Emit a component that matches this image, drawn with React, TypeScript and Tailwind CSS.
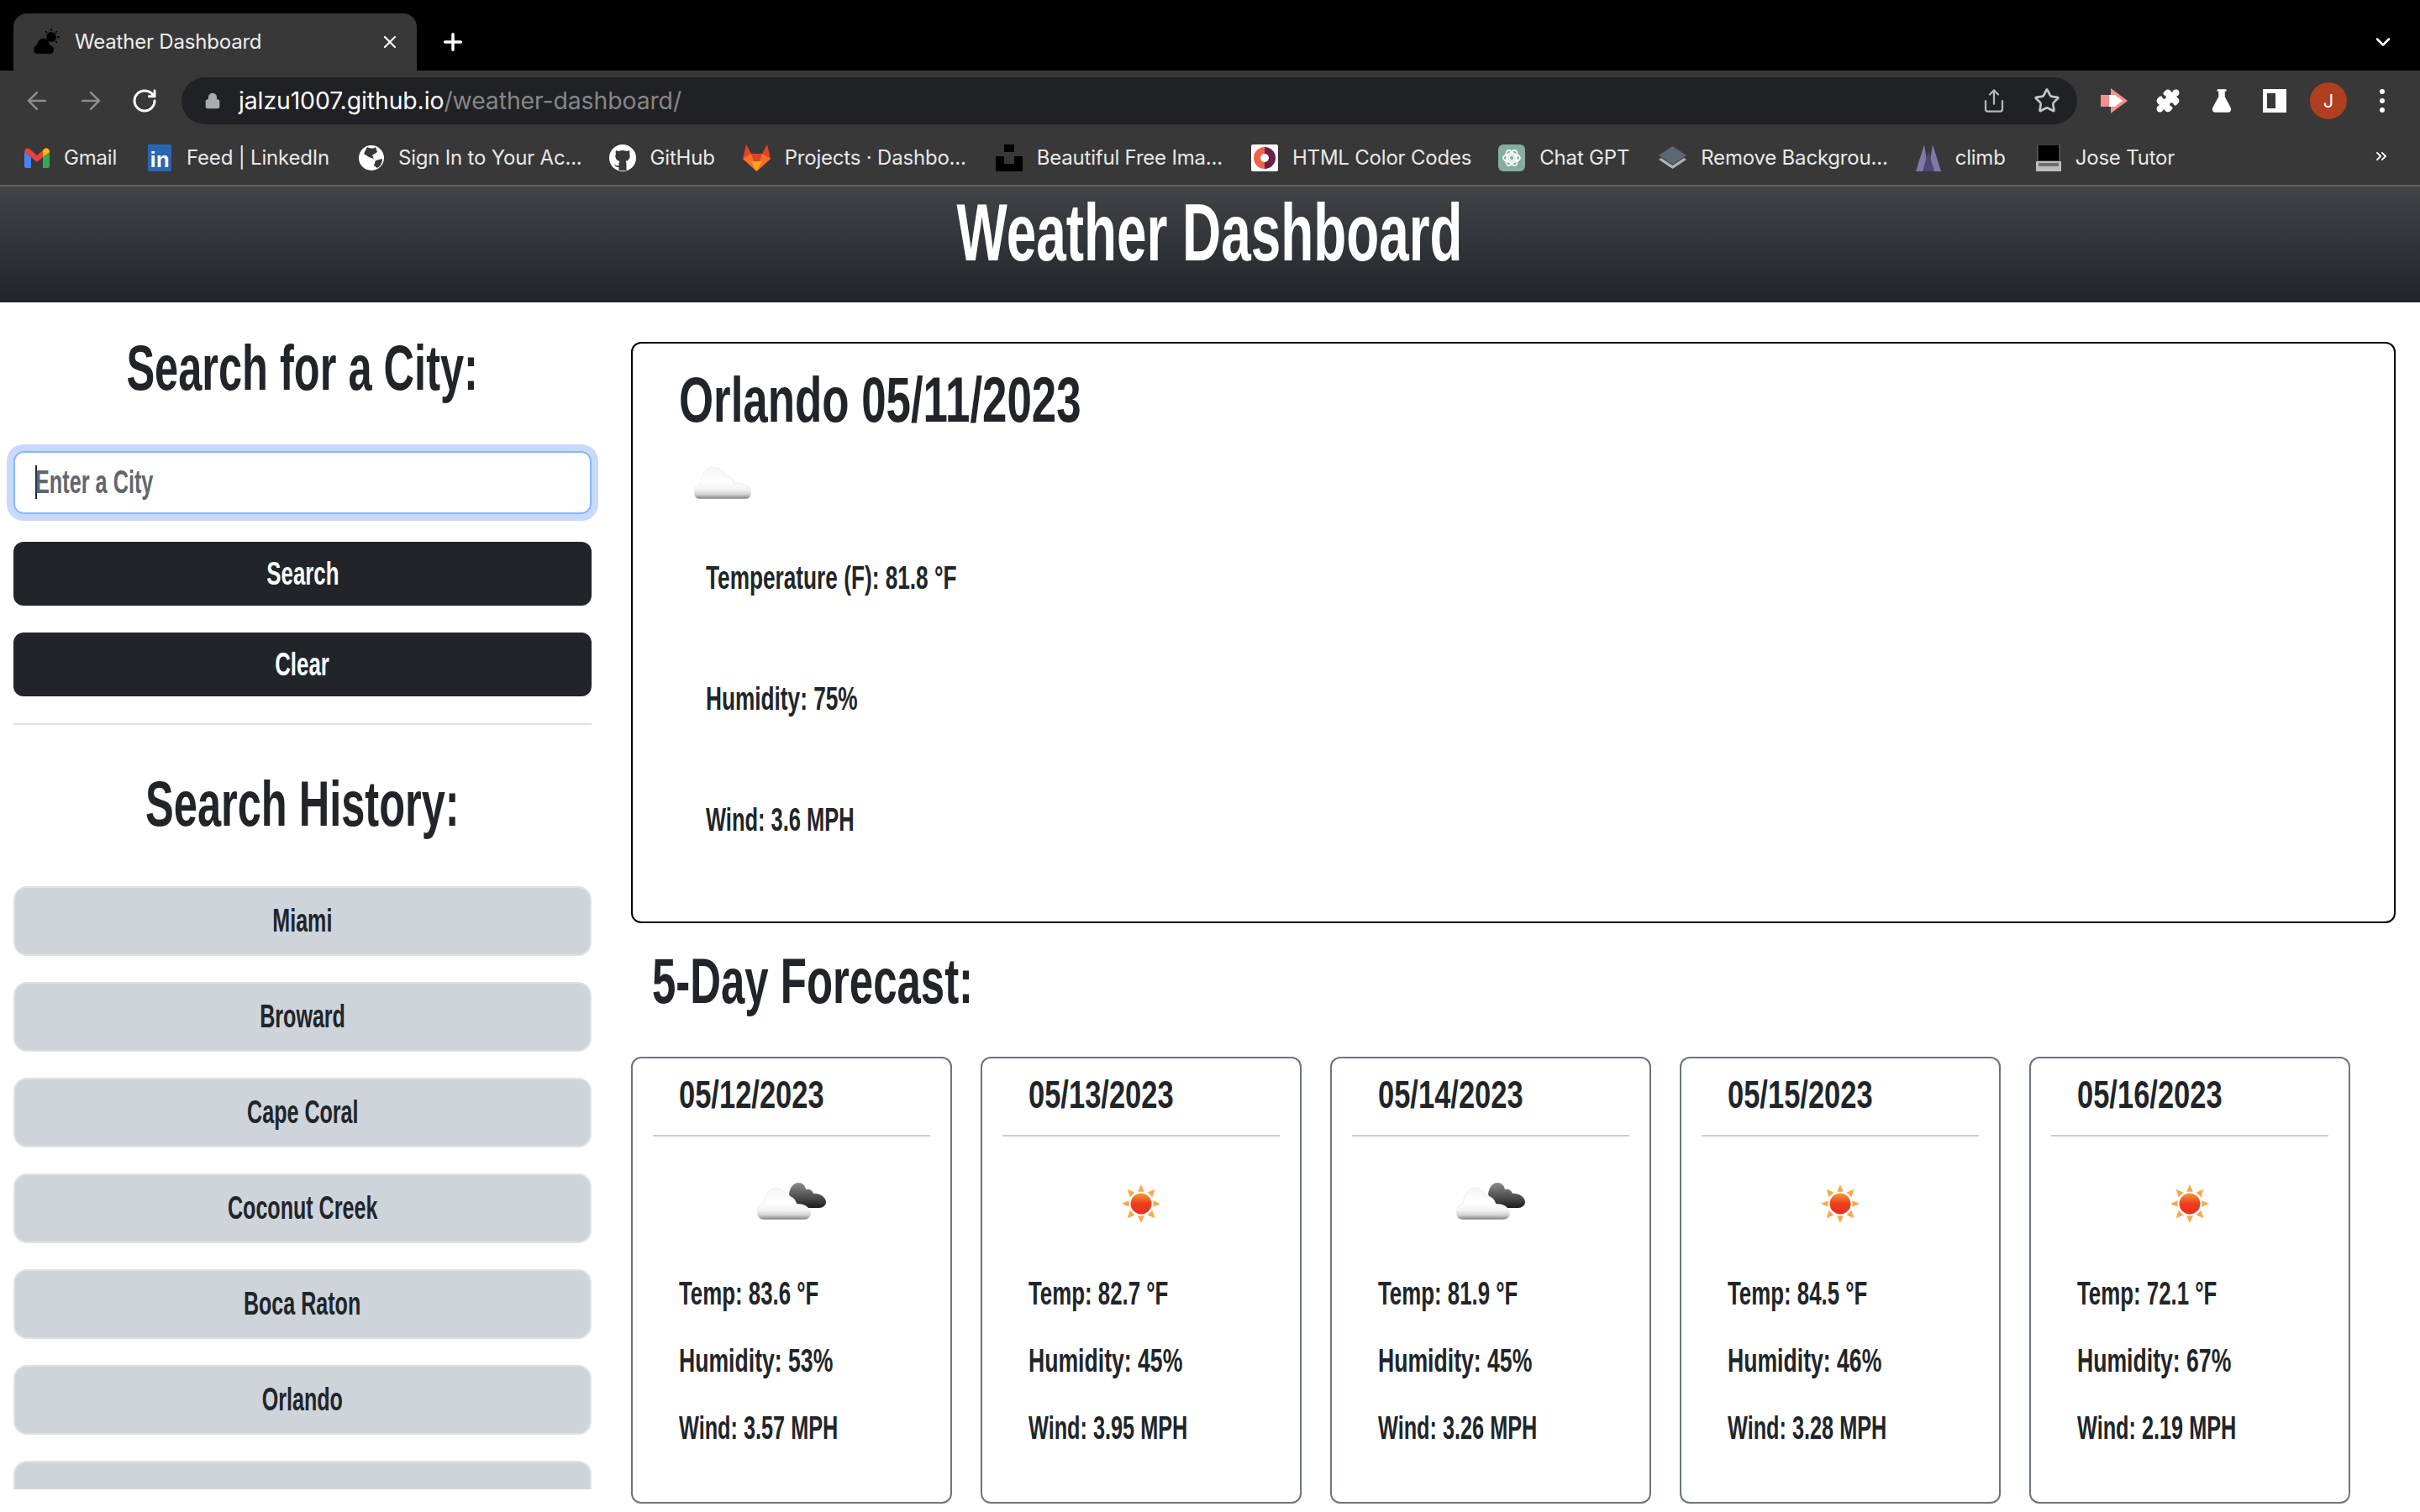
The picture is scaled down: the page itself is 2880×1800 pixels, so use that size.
import React from 'react';
import { ArrowLeft, ArrowRight, RotateCw, Lock, Share, Star, Puzzle, FlaskConical, X, Plus, ChevronDown, ChevronsRight } from 'lucide-react';

function PlainCloud() {
  return (
    <svg viewBox="0 0 68 38" className="w-[68px] h-[38px] ml-[18px] mt-[27px]">
      <defs>
        <linearGradient id="cloudPlain" x1="0" y1="0" x2="0" y2="1">
          <stop offset="0" stopColor="#f4f4f4" />
          <stop offset="0.45" stopColor="#ffffff" />
          <stop offset="0.72" stopColor="#f2f2f2" />
          <stop offset="0.86" stopColor="#d0d0d0" />
          <stop offset="1" stopColor="#7d7d7d" />
        </linearGradient>
      </defs>
      <path d="M6 38 C2 38 0 34 0 30 C0 25 3 21 8 20 C9 8 15 0 23 0 C30 0 35 4 37 10 C42 10 47 14 48 20 C50 19 53 19 56 20 C62 20 68 24 68 30 C68 35 65 38 62 38 Z" fill="url(#cloudPlain)" stroke="#e6e6e6" strokeWidth="0.7" />
    </svg>
  );
}

function PartlyCloud({ index }: { index: number }) {
  return (
    <svg viewBox="0 0 82 44" className="w-[82px] h-[44px]">
      <defs>
        <linearGradient id={`front${index}`} x1="0" y1="0" x2="0" y2="1">
          <stop offset="0" stopColor="#f4f4f4" />
          <stop offset="0.45" stopColor="#ffffff" />
          <stop offset="0.72" stopColor="#f2f2f2" />
          <stop offset="0.86" stopColor="#d0d0d0" />
          <stop offset="1" stopColor="#7d7d7d" />
        </linearGradient>
        <linearGradient id={`back${index}`} x1="0" y1="0" x2="0" y2="1">
          <stop offset="0" stopColor="#8c8c8c" />
          <stop offset="0.7" stopColor="#404040" />
          <stop offset="1" stopColor="#1c1c1c" />
        </linearGradient>
      </defs>
      <path d="M38 14 C39 5 44 0 49 0 C54 0 57 3 58 8 C62 7 66 9 67 13 C72 12 82 16 82 23 C82 27 78 30 74 30 L60 30 C52 30 42 22 38 14 Z" fill={`url(#back${index})`} />
      <path d="M8 44 C3 44 0 40 0 35 C0 30 3 26 8 25 C9 15 14 6 22 6 C28 6 33 10 36 16 C42 16 46 20 47 26 C55 24 64 30 64 37 C64 41 60 44 56 44 Z" fill={`url(#front${index})`} stroke="#e6e6e6" strokeWidth="0.7" />
    </svg>
  );
}

function SunIcon() {
  return (
    <svg viewBox="0 0 48 48" className="w-[46px] h-[46px] mt-[2px]">
      <defs>
        <linearGradient id="sunFill" x1="0" y1="0" x2="0" y2="1">
          <stop offset="0" stopColor="#f59a32" />
          <stop offset="0.5" stopColor="#ee3c1d" />
          <stop offset="1" stopColor="#ea3020" />
        </linearGradient>
      </defs>
      <g fill="#f7a94a">
        <polygon points="24,0 28,9 20,9" />
        <polygon points="24,48 28,39 20,39" />
        <polygon points="0,24 9,20 9,28" />
        <polygon points="48,24 39,20 39,28" />
        <polygon points="7,6 16,10 10,16" />
        <polygon points="41,6 32,10 38,16" />
        <polygon points="7,42 16,38 10,32" />
        <polygon points="41,42 32,38 38,32" />
      </g>
      <circle cx="24" cy="24" r="13" fill="url(#sunFill)" />
    </svg>
  );
}

const favicon = {
  gmail: (
    <svg viewBox="0 0 30 24" className="w-[30px] h-[24px]">
      <path d="M0 5 L8 11 V24 H2 C1 24 0 23 0 22 Z" fill="#4285f4" />
      <path d="M30 5 L22 11 V24 H28 C29 24 30 23 30 22 Z" fill="#34a853" />
      <path d="M0 5 C0 1 4 -1 7 2 L15 9 L23 2 C26 -1 30 1 30 5 L22 11 L15 17 L8 11 Z" fill="#ea4335" />
      <path d="M22 3.500 L23 2 C26 -1 30 1 30 5 L22 11 Z" fill="#fbbc04" />
    </svg>
  ),
  linkedin: (
    <div className="w-[28px] h-[32px] rounded-[2px] bg-[#2867b2] flex items-end justify-center text-white text-[26px] leading-[28px] font-bold [font-family:'Liberation_Sans',sans-serif]">in</div>
  ),
  globe: (
    <svg viewBox="0 0 30 30" className="w-[30px] h-[30px]">
      <circle cx="15" cy="15" r="15" fill="#fff" />
      <path d="M10 2 C14 4 18 4 20 2 L22 8 L16 12 L18 16 L12 14 L6 10 Z M20 18 L28 16 C28 20 26 25 22 27 L18 24 Z" fill="#383838" />
    </svg>
  ),
  github: (
    <svg viewBox="0 0 32 32" className="w-[32px] h-[32px]">
      <circle cx="16" cy="16" r="16" fill="#fff" />
      <path d="M16 7 C19 7 20 8 21 8 C22 8 23 7 24 7 C24.500 9 24.500 10 24 11 C25.500 14 24.500 19 19.500 20 C20.500 21 20.500 23 20.500 25 L20.500 31 L11.500 31 L11.500 27 C9 27.500 7 26 6 24 C8 24.500 9 26 11.500 25 C11.500 23 11.500 21 12.500 20 C7.500 19 6.500 14 8 11 C7.500 10 7.500 9 8 7 C9 7 10 8 11 8 C12 8 13 7 16 7 Z" fill="#383838" />
    </svg>
  ),
  gitlab: (
    <svg viewBox="0 0 33 32" className="w-[33px] h-[32px]">
      <path d="M16.500 32 L0 17 L4 0 L10 11 H23 L29 0 L33 17 Z" fill="#e2432a" />
      <path d="M16.500 32 L0 17 L10 11 Z M16.500 32 L33 17 L23 11 Z" fill="#fc6d26" />
      <path d="M16.500 32 L10 20 H23 Z" fill="#fca326" />
    </svg>
  ),
  unsplash: (
    <svg viewBox="0 0 32 32" className="w-[32px] h-[32px]">
      <rect x="10" y="0" width="12" height="9" fill="#000" />
      <path d="M0 14 H10 V23 H22 V14 H32 V32 H0 Z" fill="#000" />
    </svg>
  ),
  htmlColor: (
    <svg viewBox="0 0 32 32" className="w-[32px] h-[32px]">
      <rect width="32" height="32" rx="2" fill="#fff" />
      <path d="M16 3 A13 13 0 0 0 16 29 Z" fill="#ef6443" />
      <path d="M16 3 A13 13 0 0 1 16 29 Z" fill="#6b2048" />
      <circle cx="16" cy="16" r="5" fill="#fff" />
    </svg>
  ),
  chatgpt: (
    <svg viewBox="0 0 32 32" className="w-[32px] h-[32px]">
      <rect width="32" height="32" rx="6" fill="#86ad9f" />
      <g fill="none" stroke="#fff" strokeWidth="1.700">
        <circle cx="16" cy="16" r="3" />
        <ellipse cx="16" cy="16" rx="10" ry="5" />
        <ellipse cx="16" cy="16" rx="10" ry="5" transform="rotate(60 16 16)" />
        <ellipse cx="16" cy="16" rx="10" ry="5" transform="rotate(120 16 16)" />
      </g>
    </svg>
  ),
  removeBg: (
    <svg viewBox="0 0 33 28" className="w-[33px] h-[28px]">
      <polygon points="0,16 16.500,27 33,16 30,14 16.500,23 3,14" fill="#aeb2b6" />
      <polygon points="16.500,0 33,11 16.500,22 0,11" fill="#5b6772" />
    </svg>
  ),
  climb: (
    <svg viewBox="0 0 30 32" className="w-[30px] h-[32px]">
      <polygon points="10,0 15,32 0,32" fill="#8377a6" />
      <polygon points="20,0 30,32 15,32" fill="#8377a6" />
      <polygon points="15,8 22,32 8,32" fill="#4f4576" />
    </svg>
  ),
  jose: (
    <svg viewBox="0 0 30 32" className="w-[30px] h-[32px]">
      <rect x="2" y="0" width="26" height="20" rx="1" fill="#000" stroke="#777" />
      <rect x="0" y="20" width="30" height="12" fill="#bdbdbd" />
      <rect x="3" y="22" width="24" height="4" fill="#6d6d6d" />
    </svg>
  ),
};

const bookmarks = [
  { icon: favicon.gmail, label: 'Gmail', w: 'w-[30px]', gap: 'mr-[36px]' },
  { icon: favicon.linkedin, label: 'Feed | LinkedIn', w: 'w-[30px]', gap: 'mr-[35px]' },
  { icon: favicon.globe, label: 'Sign In to Your Ac...', w: 'w-[30px]', gap: 'mr-[32px]' },
  { icon: favicon.github, label: 'GitHub', w: 'w-[32px]', gap: 'mr-[33px]' },
  { icon: favicon.gitlab, label: 'Projects · Dashbo...', w: 'w-[33px]', gap: 'mr-[35px]' },
  { icon: favicon.unsplash, label: 'Beautiful Free Ima...', w: 'w-[32px]', gap: 'mr-[34px]' },
  { icon: favicon.htmlColor, label: 'HTML Color Codes', w: 'w-[32px]', gap: 'mr-[32px]' },
  { icon: favicon.chatgpt, label: 'Chat GPT', w: 'w-[32px]', gap: 'mr-[35px]' },
  { icon: favicon.removeBg, label: 'Remove Backgrou...', w: 'w-[33px]', gap: 'mr-[33px]' },
  { icon: favicon.climb, label: 'climb', w: 'w-[30px]', gap: 'mr-[36px]' },
  { icon: favicon.jose, label: 'Jose Tutor', w: 'w-[30px]', gap: '' },
];

const forecast = [
  { date: '05/12/2023', kind: 'cloud', temp: '83.6', humidity: '53', wind: '3.57' },
  { date: '05/13/2023', kind: 'sun', temp: '82.7', humidity: '45', wind: '3.95' },
  { date: '05/14/2023', kind: 'cloud', temp: '81.9', humidity: '45', wind: '3.26' },
  { date: '05/15/2023', kind: 'sun', temp: '84.5', humidity: '46', wind: '3.28' },
  { date: '05/16/2023', kind: 'sun', temp: '72.1', humidity: '67', wind: '2.19' },
];

const cities = ['Miami', 'Broward', 'Cape Coral', 'Coconut Creek', 'Boca Raton', 'Orlando', ''];

function BrowserChrome() {
  return (
    <div className="[font-family:Inter,sans-serif] text-white">
      {/* Tab strip */}
      <div className="h-[84px] bg-black flex items-end pl-4 relative">
        <div className="w-[480px] h-[68px] bg-[#383838] rounded-t-[16px] flex items-center pl-[24px] pr-[20px]">
          <svg viewBox="0 0 32 32" className="w-[32px] h-[32px] mr-[17px]">
            <circle cx="21" cy="10" r="6" fill="#000" />
            <path d="M21 0 V3 M31 10 H28 M28 3 L26 5 M28 17 L26 15 M14 3 L16 5" stroke="#000" strokeWidth="1.500" />
            <path d="M5 30 C1 30 0 27 0 25 C0 22 2 20 4 20 C5 14 9 11 13 12 C17 13 19 17 19 20 C22 20 24 22 24 25 C24 28 22 30 20 30 Z" fill="#000" />
          </svg>
          <span className="text-[24px] leading-none text-[#eeeeee] flex-1 whitespace-nowrap tracking-[-0.2px]">Weather Dashboard</span>
          <X className="w-[24px] h-[24px] text-white" strokeWidth={2.2} />
        </div>
        <Plus className="w-[32px] h-[32px] ml-[27px] mb-[18px] text-white" strokeWidth={2.6} />
        <ChevronDown className="absolute right-[30px] top-[36px] w-[28px] h-[28px] text-white" strokeWidth={2.2} />
      </div>

      {/* Toolbar */}
      <div className="h-[64px] bg-[#383838] flex items-start pt-2">
        <div className="w-[216px] h-[56px] flex items-center pl-[27px] shrink-0">
          <ArrowLeft className="w-[34px] h-[34px] text-[#8c8c8c]" strokeWidth={1.8} />
          <ArrowRight className="w-[34px] h-[34px] ml-[30px] text-[#8c8c8c]" strokeWidth={1.8} />
          <RotateCw className="w-[32px] h-[32px] ml-[31px] text-white" strokeWidth={2.2} />
        </div>
        <div className="w-[2256px] h-[56px] bg-[#202124] rounded-full flex items-center pl-[27px] pr-[20px] shrink-0">
          <Lock className="w-[20px] h-[22px] text-[#a9abae] fill-[#a9abae] mr-[21px]" strokeWidth={2} />
          <span className="text-[28.4px] leading-none whitespace-nowrap flex-1 tracking-[-0.1px]">
            <span className="text-white">jalzu1007.github.io</span>
            <span className="text-[#858689]">/weather-dashboard/</span>
          </span>
          <Share className="w-[30px] h-[30px] text-[#b5b6b8]" strokeWidth={1.8} />
          <Star className="w-[32px] h-[32px] ml-[32px] text-[#c4c5c7]" strokeWidth={2} />
        </div>
        <div className="flex-1 h-[56px] flex items-center pl-[28px]">
          <svg viewBox="0 0 32 30" className="w-[32px] h-[30px]">
            <polygon points="12,0 32,15 12,30" fill="#f58f8f" />
            <rect x="0" y="8" width="18" height="14" fill="#f58f8f" />
            <rect x="10" y="8" width="8" height="14" fill="#fff" />
            <polygon points="18,9 26,15 18,21" fill="#fff" />
          </svg>
          <Puzzle className="w-[30px] h-[30px] ml-[33px] text-white fill-white" strokeWidth={1.5} />
          <FlaskConical className="w-[30px] h-[30px] ml-[34px] text-white fill-white" strokeWidth={2} />
          <div className="w-[28px] h-[28px] ml-[34px] border-[5px] border-white bg-[#383838] border-r-[13px]" />
          <div className="w-[44px] h-[44px] ml-[28px] rounded-full bg-[#ae3f1f] flex items-center justify-center text-[22px] text-white">J</div>
          <div className="ml-[39px] flex flex-col gap-[5px]">
            <div className="w-[6px] h-[6px] rounded-full bg-white" />
            <div className="w-[6px] h-[6px] rounded-full bg-white" />
            <div className="w-[6px] h-[6px] rounded-full bg-white" />
          </div>
        </div>
      </div>

      {/* Bookmarks */}
      <div className="h-[74px] bg-[#383838] border-b-2 border-[#606164] flex items-center pl-[29px] pt-[7px] relative">
        {bookmarks.map((b) => (
          <div key={b.label} className={`flex items-center gap-[17px] ${b.gap}`}>
            <div className={`${b.w} flex justify-center shrink-0`}>{b.icon}</div>
            <span className="text-[24px] leading-none text-[#e8e8e8] whitespace-nowrap tracking-[-0.2px]">{b.label}</span>
          </div>
        ))}
        <ChevronsRight className="absolute right-[36px] top-[28px] w-[20px] h-[20px] text-white" strokeWidth={2.2} />
      </div>
    </div>
  );
}

function ForecastCard({ day, index }: { day: (typeof forecast)[number]; index: number }) {
  return (
    <div className="w-[382px] h-[532px] border-2 border-[#6c757d] rounded-[12px] shrink-0 px-[24px]">
      <div className="h-[93px] border-b-2 border-[#cccccc] pl-[31px] pt-[15px]">
        <span className="inline-block origin-left scale-x-[0.75] text-[46px] leading-[56px] font-bold whitespace-nowrap">{day.date}</span>
      </div>
      <div className="h-[102px] mt-[55px] mb-[6px] flex justify-center">
        {day.kind === 'cloud'
          ? <PartlyCloud index={index} />
          : <SunIcon />}
      </div>
      <div className="pl-[31px] flex flex-col gap-[32px] text-[38px] leading-[48px] font-bold">
        <p className="whitespace-nowrap"><span className="inline-block origin-left scale-x-[0.68]">Temp: {day.temp} °F</span></p>
        <p className="whitespace-nowrap"><span className="inline-block origin-left scale-x-[0.7]">Humidity: {day.humidity}%</span></p>
        <p className="whitespace-nowrap"><span className="inline-block origin-left scale-x-[0.665]">Wind: {day.wind} MPH</span></p>
      </div>
    </div>
  );
}

export default function App() {
  return (
    <div className="w-[2880px] h-[1800px] overflow-hidden bg-white text-[#212529] [font-family:'Liberation_Sans_Narrow','Liberation_Sans',sans-serif]">
      <BrowserChrome />

      <header className="h-[138px] bg-gradient-to-b from-[#414347] to-[#212529] text-center">
        <h1 className="inline-block scale-x-[0.665] text-[96px] leading-[110px] font-bold text-white whitespace-nowrap">Weather Dashboard</h1>
      </header>

      <div className="flex">
        {/* Search column */}
        <aside className="w-[720px] pl-4 pr-4 shrink-0">
          <h2 className="text-center h-[153px] pt-[36px] text-[76px] leading-[84px] font-bold whitespace-nowrap">
            <span className="inline-block scale-x-[0.665]">Search for a City:</span>
          </h2>
          <div className="mt-[24px] h-[75px] border-2 border-[#86b7fe] rounded-[12px] ring-8 ring-[#c8d9fb] flex items-center pl-[24px] relative">
            <div className="absolute left-[24px] top-[15px] w-[2px] h-[40px] bg-[#212529]" />
            <span className="inline-block origin-left scale-x-[0.665] text-[38px] font-bold text-[#5f666d] whitespace-nowrap">Enter a City</span>
          </div>
          <button className="mt-[33px] w-full h-[76px] rounded-[12px] bg-[#212529] text-white text-[38px] font-bold leading-[70px]">
            <span className="inline-block scale-x-[0.68]">Search</span>
          </button>
          <button className="mt-[32px] w-full h-[76px] rounded-[12px] bg-[#212529] text-white text-[38px] font-bold leading-[70px]">
            <span className="inline-block scale-x-[0.68]">Clear</span>
          </button>
          <hr className="mt-[32px] border-t-2 border-[#dee2e6]" />
          <h2 className="text-center mt-[52px] text-[76px] leading-[84px] font-bold whitespace-nowrap">
            <span className="inline-block scale-x-[0.665]">Search History:</span>
          </h2>
          <div className="mt-[56px] h-[718px] overflow-hidden flex flex-col gap-[31px]">
            {cities.map((city, i) => (
              <button key={i} className="h-[83px] shrink-0 rounded-[16px] bg-[#ced4da] border-2 border-[#dee2e6] text-[38px] font-bold">
                <span className="inline-block scale-x-[0.66]">{city}</span>
              </button>
            ))}
          </div>
        </aside>

        {/* Results column */}
        <main className="flex-1 pl-[31px] pt-[47px] pr-[29px]">
          <section className="h-[692px] border-2 border-black rounded-[12px] pl-[55px] pt-[23px]">
            <h2 className="h-[97px] text-[76px] leading-[88px] font-bold whitespace-nowrap">
              <span className="inline-block origin-left scale-x-[0.695]">Orlando 05/11/2023</span>
            </h2>
            <PlainCloud />
            <div className="pl-[32px] mt-[70px] flex flex-col gap-[96px] text-[38px] leading-[48px] font-bold">
              <p className="whitespace-nowrap"><span className="inline-block origin-left scale-x-[0.69]">Temperature (F): 81.8 °F</span></p>
              <p className="whitespace-nowrap"><span className="inline-block origin-left scale-x-[0.69]">Humidity: 75%</span></p>
              <p className="whitespace-nowrap"><span className="inline-block origin-left scale-x-[0.67]">Wind: 3.6 MPH</span></p>
            </div>
          </section>
          <h2 className="mt-[22px] pl-[25px] h-[93px] text-[76px] leading-[94px] font-bold whitespace-nowrap">
            <span className="inline-block origin-left scale-x-[0.67]">5-Day Forecast:</span>
          </h2>
          <div className="mt-[44px] flex gap-[34px]">
            {forecast.map((day, i) => (
              <ForecastCard key={day.date} day={day} index={i} />
            ))}
          </div>
        </main>
      </div>
    </div>
  );
}
